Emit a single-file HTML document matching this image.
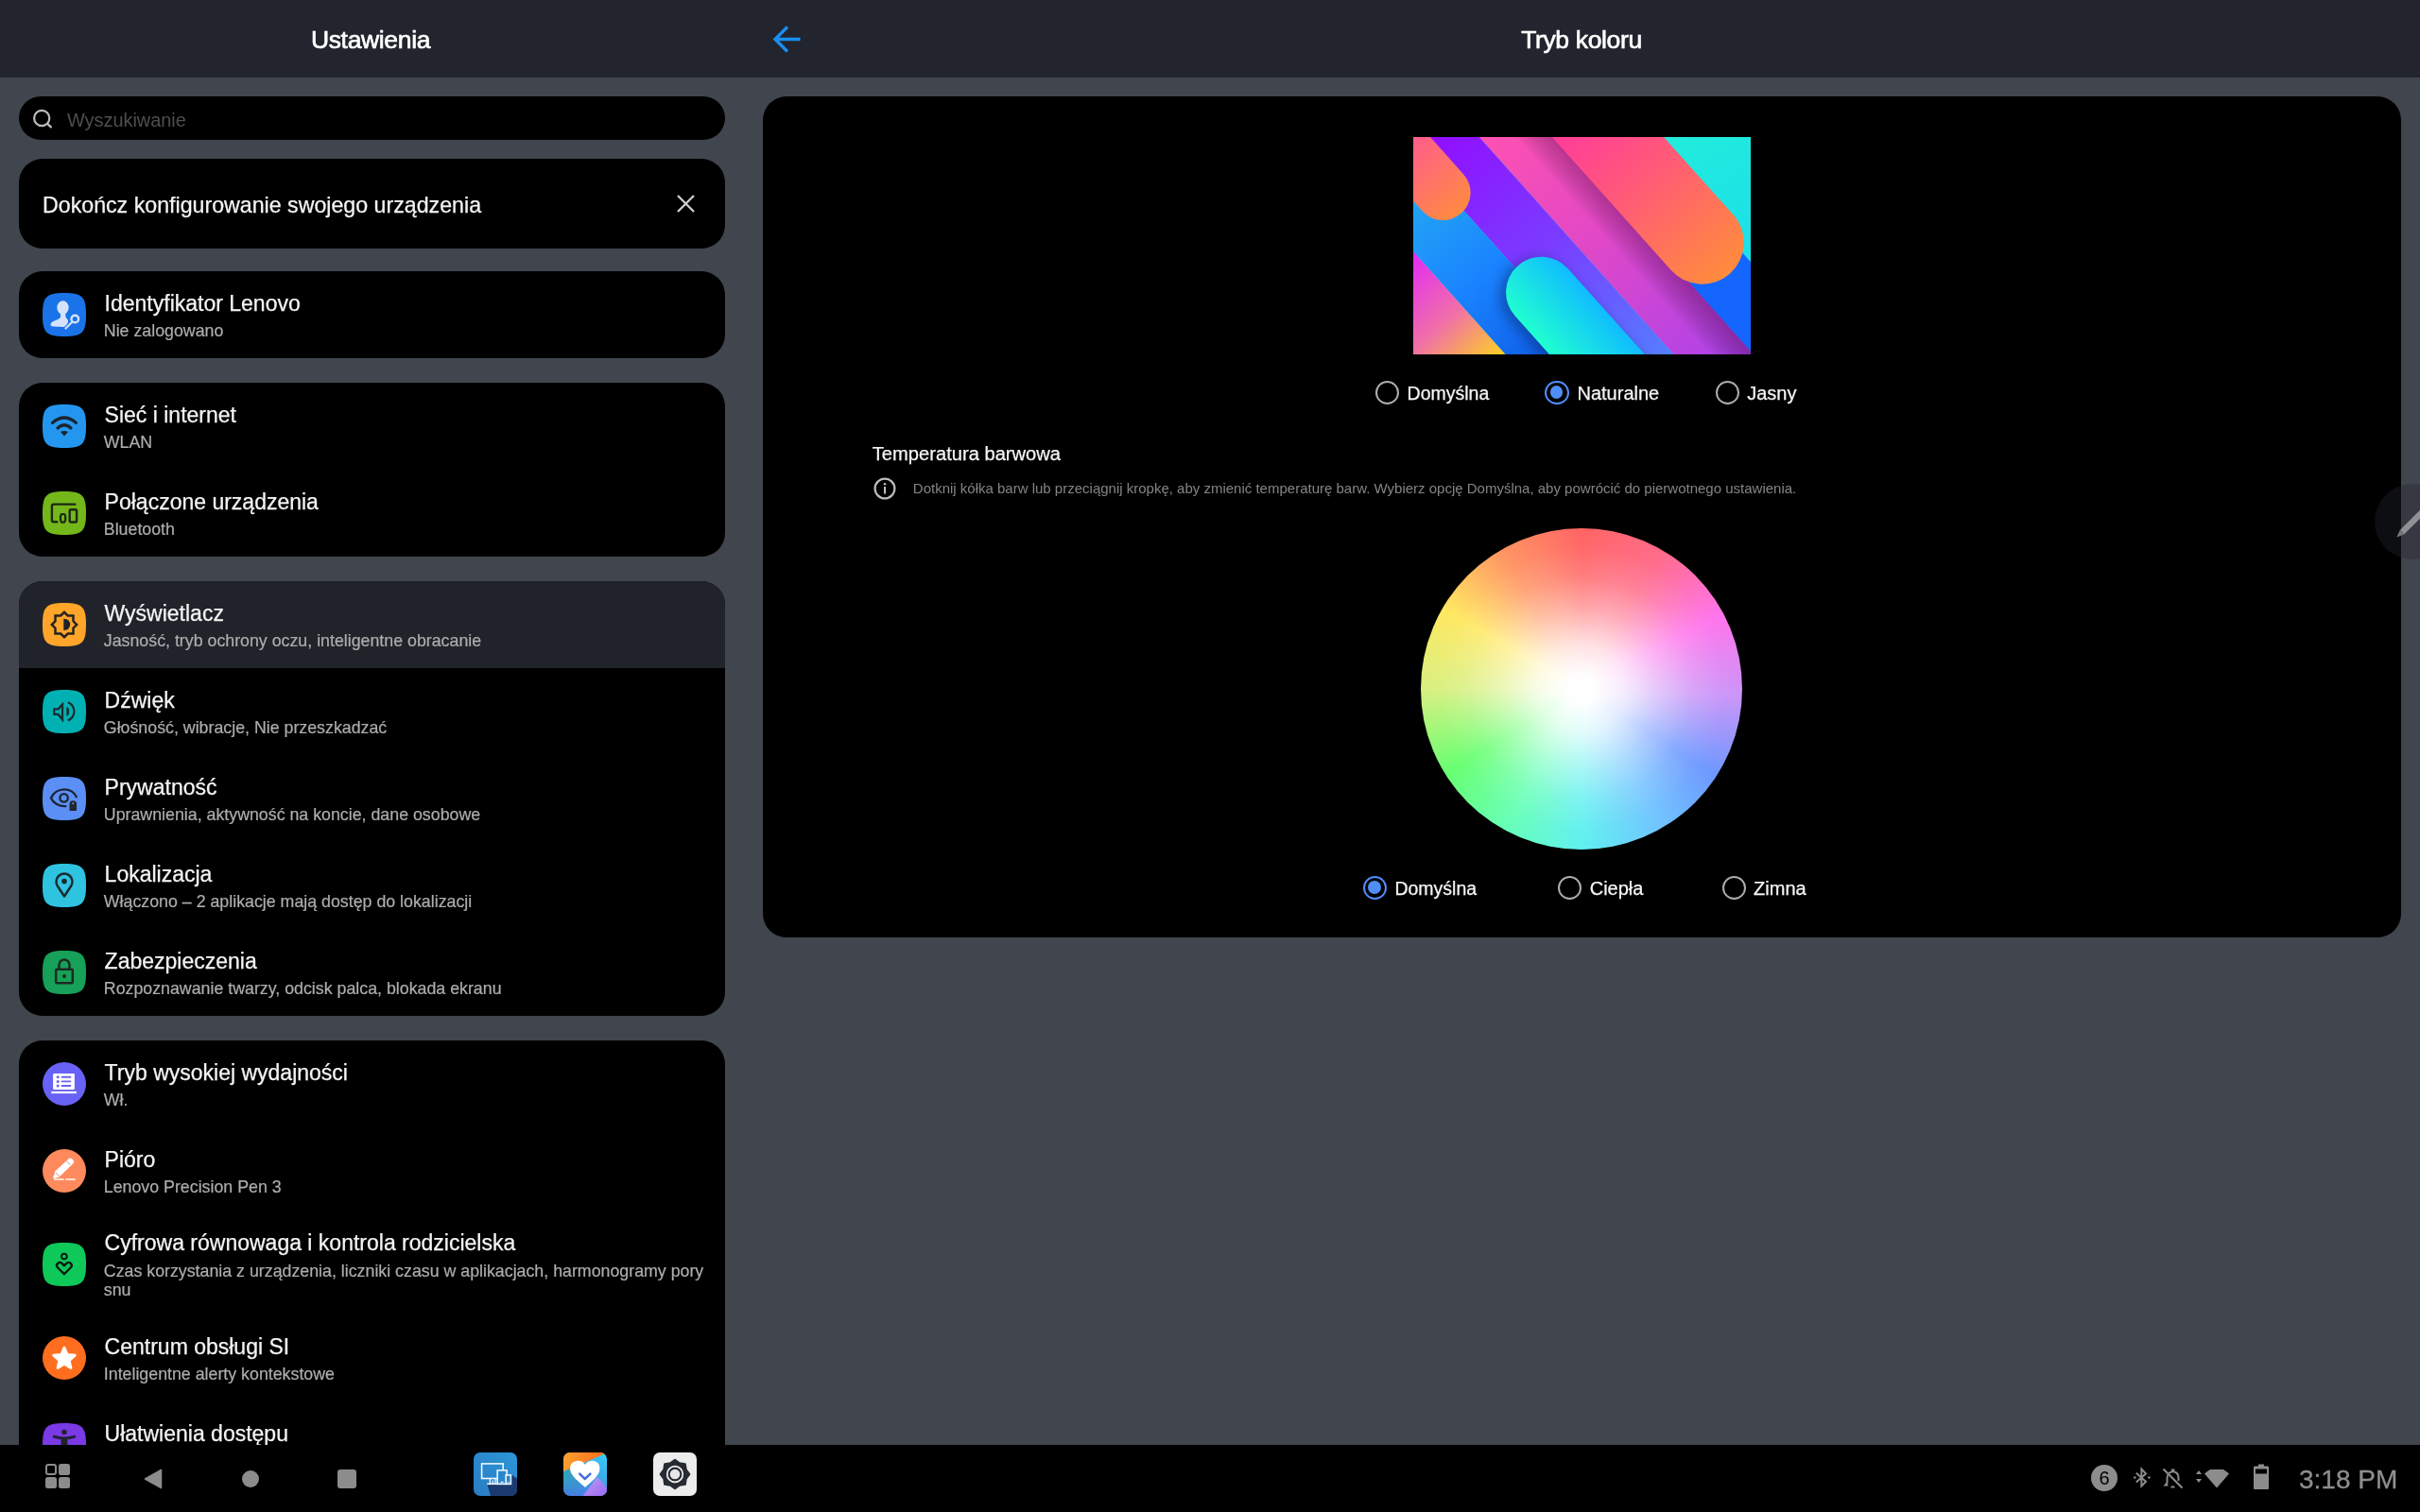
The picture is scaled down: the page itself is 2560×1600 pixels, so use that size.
<!DOCTYPE html>
<html><head><meta charset="utf-8">
<style>
*{margin:0;padding:0;box-sizing:border-box}
html,body{width:2560px;height:1600px;overflow:hidden;background:#41454d;font-family:"Liberation Sans",sans-serif;color:#f2f2f2}
.abs{position:absolute}
#hdr{left:0;top:0;width:2560px;height:82px;background:#22252d}
.htitle{top:29px;font-size:26.5px;font-weight:400;letter-spacing:-0.35px;-webkit-text-stroke:0.65px #fff;line-height:26px;color:#fff;white-space:nowrap;transform:translateX(-50%)}
.card{background:#000;border-radius:25px;left:20px;width:747px;overflow:hidden}
.row{position:absolute;left:0;width:747px;height:92px}
.row .ic{position:absolute;left:25px;top:23px;width:46px;height:46px}
.row .t{position:absolute;left:90.6px;top:22.5px;font-size:23px;line-height:23px;white-space:nowrap;color:#f4f4f4;-webkit-text-stroke:0.25px #f4f4f4}
.row .s{position:absolute;left:89.8px;top:54px;font-size:17.8px;line-height:18px;white-space:nowrap;color:#adadad;-webkit-text-stroke:0.2px #adadad}
#nav{left:0;top:1529px;width:2560px;height:71px;background:#000}
.radio{position:absolute;width:25.6px;height:25.6px;border-radius:50%;border:2.6px solid #adadad}
.radio.on{border-color:#4f8ef7}
.radio.on::after{content:"";position:absolute;left:3.3px;top:3.3px;width:13.8px;height:13.8px;border-radius:50%;background:#4f8ef7}
.rl{position:absolute;font-size:20px;line-height:20px;white-space:nowrap;color:#f4f4f4;-webkit-text-stroke:0.25px #f4f4f4}
</style></head>
<body><div id="root" style="position:absolute;left:0;top:0;width:2560px;height:1600px;will-change:transform">
<div id="hdr" class="abs"></div>
<div class="abs htitle" style="left:392px">Ustawienia</div>
<div class="abs htitle" style="left:1673px">Tryb koloru</div>
<svg class="abs" style="left:812px;top:21px" width="40" height="40" viewBox="0 0 40 40"><path d="M34.5,20.5 H9 M21,7.5 L8,20.5 L21,33.5" fill="none" stroke="#1a8ef0" stroke-width="3.4"/></svg>

<!-- search -->
<div class="abs" style="left:20px;top:102px;width:747px;height:46px;border-radius:23px;background:#000"></div>
<svg class="abs" style="left:33px;top:114px" width="24" height="24" viewBox="0 0 24 24"><circle cx="11.2" cy="11" r="8.1" fill="none" stroke="#bdbdbd" stroke-width="2.2"/><path d="M17.6,17.4 L20.8,20.4" stroke="#bdbdbd" stroke-width="2.3" stroke-linecap="round"/></svg>
<div class="abs" style="left:71px;top:117px;font-size:19.9px;line-height:20px;color:#4e4e4e;white-space:nowrap">Wyszukiwanie</div>

<!-- setup card -->
<div class="abs card" style="top:168px;height:95px"></div>
<div class="abs" style="left:45px;top:205.5px;font-size:23.2px;line-height:23px;color:#f4f4f4;white-space:nowrap;-webkit-text-stroke:0.25px #f4f4f4">Dokończ konfigurowanie swojego urządzenia</div>
<svg class="abs" style="left:714px;top:204px" width="23" height="23" viewBox="0 0 23 23"><path d="M3,3 L20,20 M20,3 L3,20" stroke="#cfcfcf" stroke-width="2.3"/></svg>

<!-- card 1 -->
<div class="abs card" style="top:287px;height:92px">
 <div class="row" style="top:0">
  <svg class="ic" viewBox="0 0 46 46"><path d="M23,0C42,0 46,4 46,23C46,42 42,46 23,46C4,46 0,42 0,23C0,4 4,0 23,0Z" fill="#1a73e8"/>
   <ellipse cx="21.5" cy="15.5" rx="6.2" ry="7.2" fill="#d4e3fb"/>
   <path d="M18.5,21 L24.5,21 C24,24 24,26 26.5,28 C27.5,30 27.5,31.5 25,34 L23,36 L11,35.5 C8,35.3 8,32.5 10,31 C12,29 17,28.5 18.8,26 C19.5,24.5 19,22.5 18.5,21Z" fill="#d4e3fb"/>
   <circle cx="34.3" cy="27.5" r="3.8" fill="none" stroke="#d4e3fb" stroke-width="2.4"/>
   <path d="M31.5,30.5 L24.5,37.5" stroke="#d4e3fb" stroke-width="2.2" stroke-linecap="round"/>
  </svg>
  <div class="t">Identyfikator Lenovo</div><div class="s">Nie zalogowano</div>
 </div>
</div>
<!-- card 2 -->
<div class="abs card" style="top:405px;height:184px">
 <div class="row" style="top:0">
  <svg class="ic" viewBox="0 0 46 46"><path d="M23,0C42,0 46,4 46,23C46,42 42,46 23,46C4,46 0,42 0,23C0,4 4,0 23,0Z" fill="#2397f0"/>
   <path d="M10.5,19.5 Q23,8.5 35.5,19.5" fill="none" stroke="#1b2530" stroke-width="3.2" stroke-linecap="round"/>
   <path d="M16,25 Q23,18.5 30,25" fill="none" stroke="#1b2530" stroke-width="3.2" stroke-linecap="round"/>
   <path d="M19,29 Q23,27 27,29 L23,33.5Z" fill="#1b2530"/>
  </svg>
  <div class="t">Sieć i internet</div><div class="s">WLAN</div>
 </div>
 <div class="row" style="top:92px">
  <svg class="ic" viewBox="0 0 46 46"><path d="M23,0C42,0 46,4 46,23C46,42 42,46 23,46C4,46 0,42 0,23C0,4 4,0 23,0Z" fill="#74b71b"/>
   <path d="M34.3,13.65 H11.9 Q9.9,13.65 9.9,15.65 V30.3 Q9.9,32.3 11.9,32.3 H15.3" fill="none" stroke="#1b2a12" stroke-width="2.4" stroke-linecap="round"/>
   <rect x="28.7" y="19.2" width="7.4" height="13.3" rx="1.4" fill="none" stroke="#1b2a12" stroke-width="2.4"/>
   <path d="M20,24 H23.2 L24.2,26.4 V30.2 L23.2,32.6 H20 L19,30.2 V26.4Z" fill="none" stroke="#1b2a12" stroke-width="2.2" stroke-linejoin="round"/>
  </svg>
  <div class="t">Połączone urządzenia</div><div class="s">Bluetooth</div>
 </div>
</div>
<!-- card 3 -->
<div class="abs card" style="top:615px;height:460px">
 <div class="row" style="top:0;background:#21232b">
  <svg class="ic" viewBox="0 0 46 46"><path d="M23,0C42,0 46,4 46,23C46,42 42,46 23,46C4,46 0,42 0,23C0,4 4,0 23,0Z" fill="#ffa52a"/>
   <path d="M23.0,9.8 L26.7,13.5 L32.5,13.5 L32.5,19.3 L36.2,23.0 L32.5,26.7 L32.5,32.5 L26.7,32.5 L23.0,36.2 L19.3,32.5 L13.5,32.5 L13.5,26.7 L9.8,23.0 L13.5,19.3 L13.5,13.5 L19.3,13.5Z" fill="none" stroke="#262420" stroke-width="2.5" stroke-linejoin="miter"/>
   <path d="M22.3,16.7 H23 A6.2,6.2 0 0 1 23,29.1 H22.3Z" fill="#1f2228"/>
  </svg>
  <div class="t">Wyświetlacz</div><div class="s">Jasność, tryb ochrony oczu, inteligentne obracanie</div>
 </div>
 <div class="row" style="top:92px">
  <svg class="ic" viewBox="0 0 46 46"><path d="M23,0C42,0 46,4 46,23C46,42 42,46 23,46C4,46 0,42 0,23C0,4 4,0 23,0Z" fill="#00b1b3"/>
   <path d="M12.25,20.35 H16.6 L21.05,15.4 V31.4 L16.6,25.95 H12.25Z" fill="none" stroke="#1c2b2e" stroke-width="2.3" stroke-linejoin="miter"/>
   <path d="M25.4,18.2 A2.8,4.8 0 0 1 25.4,27.8Z" fill="#1c2b2e"/><path d="M26.9,13.2 A10.37,10.37 0 0 1 26.9,32.4" fill="none" stroke="#1c2b2e" stroke-width="2.3"/>
  </svg>
  <div class="t">Dźwięk</div><div class="s">Głośność, wibracje, Nie przeszkadzać</div>
 </div>
 <div class="row" style="top:184px">
  <svg class="ic" viewBox="0 0 46 46"><path d="M23,0C42,0 46,4 46,23C46,42 42,46 23,46C4,46 0,42 0,23C0,4 4,0 23,0Z" fill="#5b8ff5"/>
   <path d="M24.4,31.1 C17,31.6 11,27 8.9,22.4 C11.5,17 17,13.3 23,13.3 C29,13.3 33.6,16.5 35.8,21.3" fill="none" stroke="#1d2535" stroke-width="2.3" stroke-linecap="round"/>
   <circle cx="22.6" cy="22.4" r="4.2" fill="none" stroke="#1d2535" stroke-width="2.3"/>
   <path d="M28.5,29 A3.8,3.8 0 0 1 36.1,29 V35.2 Q36.1,35.9 35.4,35.9 H29.2 Q28.5,35.9 28.5,35.2Z" fill="#22272e"/>
   <circle cx="32.3" cy="28.2" r="0.9" fill="#7aa0e8"/>
  </svg>
  <div class="t">Prywatność</div><div class="s">Uprawnienia, aktywność na koncie, dane osobowe</div>
 </div>
 <div class="row" style="top:276px">
  <svg class="ic" viewBox="0 0 46 46"><path d="M23,0C42,0 46,4 46,23C46,42 42,46 23,46C4,46 0,42 0,23C0,4 4,0 23,0Z" fill="#2ec4e0"/>
   <path d="M23,34.5 L15.8,23.5 A8.5,8.5 0 1 1 30.2,23.5Z" fill="none" stroke="#1b2b30" stroke-width="2.5" stroke-linejoin="round"/>
   <circle cx="23" cy="18.6" r="2.8" fill="#1b2b30"/>
  </svg>
  <div class="t">Lokalizacja</div><div class="s">Włączono – 2 aplikacje mają dostęp do lokalizacji</div>
 </div>
 <div class="row" style="top:368px">
  <svg class="ic" viewBox="0 0 46 46"><path d="M23,0C42,0 46,4 46,23C46,42 42,46 23,46C4,46 0,42 0,23C0,4 4,0 23,0Z" fill="#16a058"/>
   <rect x="14.2" y="19.8" width="17.6" height="14.4" rx="1" fill="none" stroke="#1b2b22" stroke-width="2.5"/>
   <path d="M17.5,19.8 V15 A5.5,5.5 0 0 1 28.5,15 V19.8" fill="none" stroke="#1b2b22" stroke-width="2.5"/>
   <circle cx="23" cy="27" r="2" fill="#1b2b22"/>
  </svg>
  <div class="t">Zabezpieczenia</div><div class="s">Rozpoznawanie twarzy, odcisk palca, blokada ekranu</div>
 </div>
</div>
<!-- card 4 -->
<div class="abs card" style="top:1101px;height:520px">
 <div class="row" style="top:0">
  <svg class="ic" viewBox="0 0 46 46"><circle cx="23" cy="23" r="23" fill="#6862f6"/>
   <rect x="11.1" y="11.9" width="22.8" height="17" rx="1.2" fill="#fff"/>
   <path d="M20.6,15.8 H29.4 M20.6,20.4 H29.4 M20.6,25 H29.4" stroke="#6862f6" stroke-width="1.9" stroke-linecap="round"/>
   <circle cx="16.2" cy="15.8" r="1.5" fill="#6862f6"/><circle cx="16.2" cy="20.4" r="1.5" fill="#6862f6"/><circle cx="16.2" cy="25" r="1.5" fill="#6862f6"/>
   <rect x="9.3" y="30.9" width="26.6" height="2.2" fill="#fff"/>
  </svg>
  <div class="t">Tryb wysokiej wydajności</div><div class="s">Wł.</div>
 </div>
 <div class="row" style="top:92px">
  <svg class="ic" viewBox="0 0 46 46"><circle cx="23" cy="23" r="23" fill="#ff8a5e"/>
   <path d="M13.5,23.3 L27.6,10.2 Q29.6,8.8 31.4,10.6 L32.6,11.8 Q34,13.6 32.4,15.2 L17.6,29.6 L12.2,31 Q11,31.2 11.3,30 Z" fill="#fff"/>
   <path d="M25.2,12.6 L29.2,16.4 M13.9,24.8 L17.9,28.8" stroke="#b86848" stroke-width="0.7"/>
   <path d="M11.9,31.9 H22.6 M24.2,31.9 H34.7" stroke="#ffe0cc" stroke-width="2"/>
  </svg>
  <div class="t">Pióro</div><div class="s">Lenovo Precision Pen 3</div>
 </div>
 <div class="row" style="top:184px;height:106px">
  <svg class="ic" style="top:30px" viewBox="0 0 46 46"><path d="M23,0C42,0 46,4 46,23C46,42 42,46 23,46C4,46 0,42 0,23C0,4 4,0 23,0Z" fill="#0ec85a"/>
   <circle cx="22.9" cy="14.6" r="2.85" fill="none" stroke="#06170c" stroke-width="1.9"/>
   <path d="M22.9,24.3 L20.2,21.7 Q18.4,20.2 16.6,21.5 L15.9,22.1 Q14,24 15.7,26 L22.9,33.3 L30.1,26 Q31.8,24 29.9,22.1 L29.2,21.5 Q27.4,20.2 25.6,21.7 Z" fill="none" stroke="#06170c" stroke-width="2.3" stroke-linejoin="round"/>
  </svg>
  <div class="t" style="top:19px">Cyfrowa równowaga i kontrola rodzicielska</div>
  <div class="s" style="top:49.6px;line-height:20.8px">Czas korzystania z urządzenia, liczniki czasu w aplikacjach, harmonogramy pory<br>snu</div>
 </div>
 <div class="row" style="top:290px">
  <svg class="ic" viewBox="0 0 46 46"><circle cx="23" cy="23" r="23" fill="#ff6e1e"/>
   <path d="M23.00,12.00 L26.23,19.45 L34.32,20.22 L28.23,25.60 L29.99,33.53 L23.00,29.40 L16.01,33.53 L17.77,25.60 L11.68,20.22 L19.77,19.45Z" fill="#fff" stroke="#fff" stroke-width="2.8" stroke-linejoin="round"/>
  </svg>
  <div class="t">Centrum obsługi SI</div><div class="s">Inteligentne alerty kontekstowe</div>
 </div>
 <div class="row" style="top:382px">
  <svg class="ic" viewBox="0 0 46 46"><path d="M23,0C42,0 46,4 46,23C46,42 42,46 23,46C4,46 0,42 0,23C0,4 4,0 23,0Z" fill="#7a3ae6"/>
   <circle cx="23" cy="9.4" r="2.7" fill="#22222c"/>
   <path d="M12.2,14.3 Q23,17.8 33.8,14.3" fill="none" stroke="#26203a" stroke-width="3" stroke-linecap="round"/>
   <path d="M19.6,15.5 H26.4 V36 H19.6Z" fill="#22232a"/>
  </svg>
  <div class="t">Ułatwienia dostępu</div>
 </div>
</div>


<div id="nav" class="abs"></div>
<svg class="abs" style="left:48px;top:1549px" width="26" height="26" viewBox="0 0 26 26">
 <rect x="1" y="1" width="10" height="10" rx="2" fill="none" stroke="#8c8c8c" stroke-width="2"/>
 <rect x="14" y="0" width="12" height="12" rx="2.5" fill="#8c8c8c"/>
 <rect x="0" y="14" width="12" height="12" rx="2.5" fill="#8c8c8c"/>
 <rect x="14" y="14" width="12" height="12" rx="2.5" fill="#8c8c8c"/>
</svg>
<svg class="abs" style="left:152px;top:1554px" width="20" height="22" viewBox="0 0 20 22"><path d="M18.5,1.5 L18.5,20.5 L1.5,11Z" fill="#8c8c8c" stroke="#8c8c8c" stroke-width="1.5" stroke-linejoin="round"/></svg>
<div class="abs" style="left:256px;top:1556px;width:18px;height:18px;border-radius:50%;background:#8c8c8c"></div>
<div class="abs" style="left:357px;top:1555px;width:20px;height:20px;border-radius:3px;background:#8c8c8c"></div>

<!-- app icons -->
<svg class="abs" style="left:501px;top:1537px" width="46" height="46" viewBox="0 0 46 46">
 <defs><clipPath id="a1"><rect width="46" height="46" rx="7"/></clipPath>
 <linearGradient id="a1g" x1="0" y1="1" x2="1" y2="0"><stop offset="0" stop-color="#2a7cc4"/><stop offset="1" stop-color="#2c96d6"/></linearGradient></defs>
 <g clip-path="url(#a1)">
  <rect width="46" height="46" fill="url(#a1g)"/>
  <path d="M14.2,33.3 L40,33.3 L40,23.4 L46,27.4 L46,46 L18,46Z" fill="#1d3a70"/>
 </g>
 <rect x="8.6" y="11.9" width="22.6" height="15.6" fill="none" stroke="#eef6ff" stroke-width="1.6"/>
 <path d="M17.4,27.5 V33.3 M23,27.5 V33.3 M20.3,29.5 V33.3" stroke="#eef6ff" stroke-width="1.3"/>
 <path d="M14.2,33.3 H40" stroke="#eef6ff" stroke-width="1.6"/>
 <rect x="25.2" y="18.9" width="9.9" height="14.4" fill="#2a86cc" stroke="#eef6ff" stroke-width="1.6"/>
 <rect x="34.2" y="23.9" width="5.2" height="9.4" fill="#2a86cc" stroke="#eef6ff" stroke-width="1.6"/>
 <path d="M28.6,31.3 H31.6 M36.2,31.3 H37.4" stroke="#dff0ff" stroke-width="1.2"/>
</svg>
<svg class="abs" style="left:596px;top:1537px" width="46" height="46" viewBox="0 0 46 46">
 <defs><clipPath id="a2"><rect width="46" height="46" rx="7"/></clipPath>
 <linearGradient id="a2o" x1="0" y1="0" x2="1" y2="0"><stop offset="0" stop-color="#ffa02e"/><stop offset="1" stop-color="#ff6a1c"/></linearGradient>
 <linearGradient id="a2b" x1="0" y1="1" x2="1" y2="0"><stop offset="0" stop-color="#4a70e8"/><stop offset="0.5" stop-color="#3c9ae0"/><stop offset="1" stop-color="#38d4ff"/></linearGradient>
 <radialGradient id="a2t" cx="0" cy="0.5" r="0.6"><stop offset="0" stop-color="#2ab0a8" stop-opacity="0.7"/><stop offset="1" stop-color="#2ab0a8" stop-opacity="0"/></radialGradient>
 <linearGradient id="a2p" x1="0" y1="0" x2="1" y2="1"><stop offset="0" stop-color="#c09cf4"/><stop offset="1" stop-color="#9a6af0"/></linearGradient></defs>
 <g clip-path="url(#a2)">
  <rect width="46" height="46" fill="url(#a2b)"/>
  <rect width="46" height="46" fill="url(#a2t)"/>
  <path d="M20.7,46 L35.9,25.7 L46,37.5 V46Z" fill="url(#a2p)"/>
  <path d="M0,0 H46 V0.5 L0,20Z" fill="url(#a2o)"/>
 </g>
 <path d="M23,37 C18,32 7,25 7,17 C7,11 12,8.8 16,8.8 C19.5,8.8 22,11 23,13 C24,11 26.5,8.8 30,8.8 C34,8.8 38.5,11 38.5,17 C38.5,25 28,32 23,37Z" fill="#fff"/>
 <path d="M17.2,22.6 L22.8,28 L28.4,22.6" fill="none" stroke="#4a6ee0" stroke-width="2.5" stroke-linecap="round" stroke-linejoin="round"/>
</svg>
<svg class="abs" style="left:691px;top:1537px" width="46" height="46" viewBox="0 0 46 46">
 <rect width="46" height="46" rx="7" fill="#ececec"/>
 <path d="M23.00,7.80 L27.82,11.36 L33.75,12.25 L34.64,18.18 L38.20,23.00 L34.64,27.82 L33.75,33.75 L27.82,34.64 L23.00,38.20 L18.18,34.64 L12.25,33.75 L11.36,27.82 L7.80,23.00 L11.36,18.18 L12.25,12.25 L18.18,11.36Z" fill="#262a33" stroke="#262a33" stroke-width="2.2" stroke-linejoin="round"/>
 <circle cx="23" cy="23" r="8.3" fill="none" stroke="#f2f2f2" stroke-width="1.7"/>
 <circle cx="23" cy="23" r="5.3" fill="#e6e6e6"/>
</svg>

<!-- status -->
<svg class="abs" style="left:2212px;top:1550px" width="28" height="28" viewBox="0 0 28 28"><circle cx="14" cy="14" r="14" fill="#8c8c8c"/><text x="14" y="21.3" text-anchor="middle" font-family="Liberation Sans" font-size="20" fill="#000">6</text></svg>
<svg class="abs" style="left:2256px;top:1552px" width="20" height="24" viewBox="0 0 20 24"><path d="M3.8,6.8 L14,15.8 L9.4,20.6 V2.6 L14,7.4 L3.8,16.4" fill="none" stroke="#8c8c8c" stroke-width="2"/><circle cx="2.3" cy="11.5" r="1.3" fill="#8c8c8c"/><circle cx="17.4" cy="11.5" r="1.3" fill="#8c8c8c"/></svg>
<svg class="abs" style="left:2287px;top:1553px" width="23" height="23" viewBox="0 0 23 23"><path d="M6.5,18.5 H3.5 L5.5,16 V11 C5.5,7.5 8,4.8 11,4.3 V2.5 H12.5 V4.3 C15.5,5 17.5,7.5 17.5,11 V14" fill="none" stroke="#8c8c8c" stroke-width="2"/><path d="M9.5,20.5 H13.5" stroke="#8c8c8c" stroke-width="2"/><path d="M1.5,1.5 L21.5,21.5" stroke="#8c8c8c" stroke-width="2.1"/></svg>
<svg class="abs" style="left:2322px;top:1555px" width="38" height="22" viewBox="0 0 38 22"><path d="M4,1 L7,5 H1Z M4,14 L7,10 H1Z" fill="#8c8c8c"/><path d="M10,4.5 Q23,-8 36,4.5 L23,19.6Z" fill="#8c8c8c"/></svg>
<svg class="abs" style="left:2383px;top:1549px" width="18" height="28" viewBox="0 0 18 28"><path d="M6,0.5 H12 V2.5 H15.5 C16.5,2.5 17,3 17,4 V25.5 C17,26.5 16.5,27 15.5,27 H2.5 C1.5,27 1,26.5 1,25.5 V4 C1,3 1.5,2.5 2.5,2.5 H6Z" fill="#8c8c8c"/><rect x="3" y="5.5" width="12" height="5" fill="#000"/></svg>
<div class="abs" style="left:2432px;top:1552px;font-size:28px;line-height:28px;color:#8e8e8e;-webkit-text-stroke:0.3px #8e8e8e;white-space:nowrap">3:18 PM</div>


<!-- right panel -->
<div class="abs" style="left:807px;top:102px;width:1733px;height:890px;border-radius:25px;background:#000"></div>
<svg class="abs" style="left:1495px;top:145px" width="357" height="230" viewBox="0 0 357 230">
 <defs>
  <clipPath id="wc"><rect width="357" height="230"/></clipPath>
  <filter id="blur6" x="-50%" y="-50%" width="200%" height="200%"><feGaussianBlur stdDeviation="6"/></filter>
  <linearGradient id="g_pink" gradientUnits="userSpaceOnUse" x1="0" y1="0" x2="410" y2="0"><stop offset="0.1" stop-color="#ff52b0"/><stop offset="0.5" stop-color="#e248c6"/><stop offset="1" stop-color="#aa42ec"/></linearGradient>
  <linearGradient id="g_pinksh" gradientUnits="userSpaceOnUse" x1="0" y1="-52" x2="0" y2="-115"><stop offset="0" stop-color="#000" stop-opacity="0"/><stop offset="0.45" stop-color="#000" stop-opacity="0"/><stop offset="1" stop-color="#4a0040" stop-opacity="0.38"/></linearGradient>
  <linearGradient id="g_purp" gradientUnits="userSpaceOnUse" x1="0" y1="0" x2="400" y2="0"><stop offset="0.05" stop-color="#9010ff"/><stop offset="0.45" stop-color="#7a3cff"/><stop offset="1" stop-color="#4a90ff"/></linearGradient>
  <linearGradient id="g_blue" gradientUnits="userSpaceOnUse" x1="0" y1="0" x2="260" y2="0"><stop offset="0.2" stop-color="#22a4f4"/><stop offset="0.6" stop-color="#1a84ff"/><stop offset="1" stop-color="#1060e8"/></linearGradient>
  <linearGradient id="g_bluesh" gradientUnits="userSpaceOnUse" x1="0" y1="46" x2="0" y2="80"><stop offset="0" stop-color="#001a70" stop-opacity="0.3"/><stop offset="0.8" stop-color="#001a70" stop-opacity="0"/></linearGradient>
  <linearGradient id="g_mag" gradientUnits="userSpaceOnUse" x1="80" y1="0" x2="240" y2="0"><stop offset="0" stop-color="#e020ff"/><stop offset="0.55" stop-color="#f070a8"/><stop offset="1" stop-color="#ffd818"/></linearGradient>
  <linearGradient id="g_or" gradientUnits="userSpaceOnUse" x1="-40" y1="0" x2="94" y2="0"><stop offset="0" stop-color="#ff4aa0"/><stop offset="0.5" stop-color="#ff6a78"/><stop offset="1" stop-color="#ff8a40"/></linearGradient>
  <linearGradient id="g_big" gradientUnits="userSpaceOnUse" x1="60" y1="0" x2="331" y2="0"><stop offset="0" stop-color="#ff30a8"/><stop offset="0.5" stop-color="#ff5a78"/><stop offset="1" stop-color="#ff8c3c"/></linearGradient>
  <linearGradient id="g_cy" gradientUnits="userSpaceOnUse" x1="0" y1="46" x2="0" y2="-29"><stop offset="0" stop-color="#20ffd0"/><stop offset="1" stop-color="#10bcff"/></linearGradient>
  <linearGradient id="g_teal" x1="0" y1="0" x2="1" y2="1"><stop offset="0" stop-color="#28f8d0"/><stop offset="1" stop-color="#18d8f0"/></linearGradient>
 </defs>
 <g clip-path="url(#wc)">
  <rect width="357" height="230" fill="url(#g_teal)"/>
  <g transform="rotate(48.2)">
   <rect x="-200" y="-178" width="800" height="66" fill="#1565ff"/>
   <rect x="-200" y="-115" width="800" height="63" fill="url(#g_pink)"/>
   <rect x="-200" y="-115" width="800" height="63" fill="url(#g_pinksh)"/>
   <rect x="-200" y="-52" width="800" height="64" fill="url(#g_purp)"/>
   <rect x="-200" y="12" width="800" height="68.7" fill="url(#g_blue)"/>
   <rect x="-200" y="80.7" width="800" height="220" fill="url(#g_mag)"/>
   <rect x="-300" y="-13.4" width="394" height="58.4" rx="29.2" fill="url(#g_or)"/>
   <rect x="172" y="-26" width="600" height="80" rx="40" fill="#001850" opacity="0.35" filter="url(#blur6)"/>
   <rect x="175.3" y="-29.2" width="600" height="75.2" rx="37.6" fill="url(#g_cy)"/>
   <rect x="-300" y="-197.5" width="631" height="88.1" rx="44" fill="url(#g_big)"/>
  </g>
 </g>
</svg>
<div class="radio" style="left:1454.5px;top:402.7px"></div><div class="rl" style="left:1488.6px;top:405.7px;font-size:19.5px">Domyślna</div>
<div class="radio on" style="left:1634.4px;top:402.7px"></div><div class="rl" style="left:1668.5px;top:405.7px">Naturalne</div>
<div class="radio" style="left:1814.9px;top:402.7px"></div><div class="rl" style="left:1848.2px;top:405.7px">Jasny</div>

<div class="abs" style="left:922.8px;top:469.8px;font-size:20.15px;line-height:20px;color:#f4f4f4;white-space:nowrap;-webkit-text-stroke:0.25px #f4f4f4">Temperatura barwowa</div>
<svg class="abs" style="left:924px;top:505px" width="24" height="24" viewBox="0 0 24 24"><circle cx="12" cy="12" r="10.4" fill="none" stroke="#bdbdbd" stroke-width="2.2"/><rect x="11" y="10" width="2.1" height="7.5" fill="#bdbdbd"/><circle cx="12.05" cy="7.2" r="1.3" fill="#bdbdbd"/></svg>
<div class="abs" style="left:965.8px;top:508.6px;font-size:15px;line-height:15px;color:#848484;white-space:nowrap">Dotknij kółka barw lub przeciągnij kropkę, aby zmienić temperaturę barw. Wybierz opcję Domyślna, aby powrócić do pierwotnego ustawienia.</div>

<div class="abs" style="left:1503px;top:559px;width:340px;height:340px;border-radius:50%;background:conic-gradient(from 0deg,#ff6464 0deg,#ff6a88 30deg,#ff74ec 62deg,#cc94f8 92deg,#6c98ff 123deg,#70c4ff 150deg,#60f0f0 180deg,#66ffb8 208deg,#66ff70 238deg,#d8f080 270deg,#ffe860 300deg,#ff9462 330deg,#ff6464 360deg)"></div>
<div class="abs" style="left:1503px;top:559px;width:340px;height:340px;border-radius:50%;background:radial-gradient(circle closest-side,#fff 0%,rgba(255,255,255,0.98) 10%,rgba(255,255,255,0.8) 28%,rgba(255,255,255,0.44) 50%,rgba(255,255,255,0.17) 70%,rgba(255,255,255,0.03) 88%,rgba(255,255,255,0) 100%)"></div>
<div class="abs" style="left:1657px;top:713px;width:32px;height:32px;border-radius:50%;border:2.5px solid #fff;box-shadow:0 0 2px rgba(0,0,0,0.03)"></div>

<div class="radio on" style="left:1441.5px;top:926.9px"></div><div class="rl" style="left:1475.4px;top:930px;font-size:19.5px">Domyślna</div>
<div class="radio" style="left:1647.8px;top:926.9px"></div><div class="rl" style="left:1681.7px;top:930px">Ciepła</div>
<div class="radio" style="left:1821.8px;top:926.9px"></div><div class="rl" style="left:1855.1px;top:930px">Zimna</div>

<!-- floating pen -->
<div class="abs" style="left:2512px;top:512px;width:80px;height:80px;border-radius:50%;background:rgba(35,37,45,0.37)"></div>
<svg class="abs" style="left:2530px;top:530px" width="30" height="40" viewBox="0 0 30 40"><path d="M11.2,33.1 L40,4.3" stroke="#8e9096" stroke-width="6.3"/><path d="M5.3,38.5 L8.9,30.8 L13.5,35.4Z" fill="#74767c"/></svg>


</div></body></html>
